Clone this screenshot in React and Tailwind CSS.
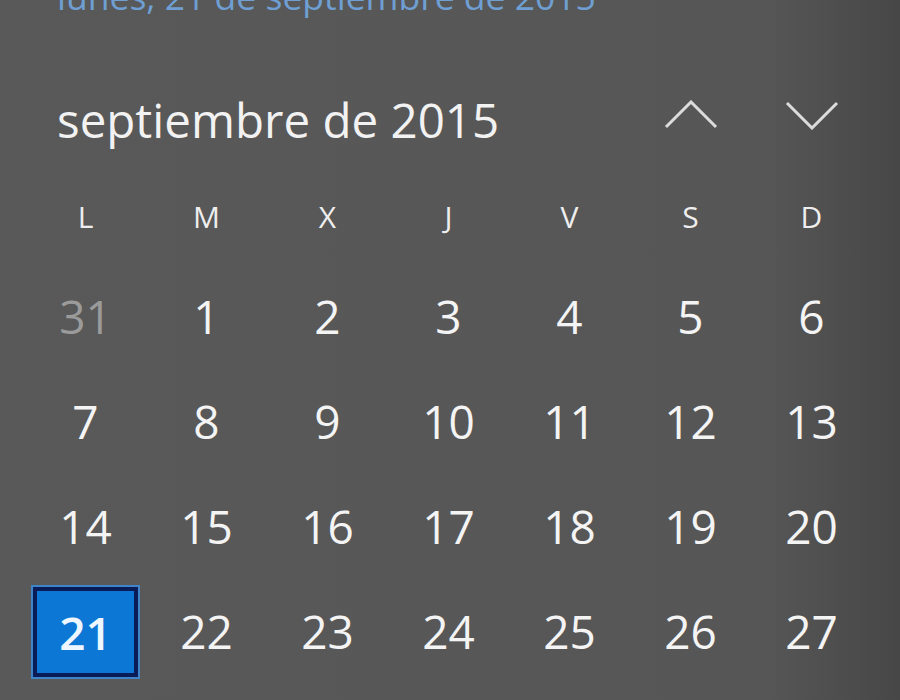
import React from "react";

const rows = [
  [31, 1, 2, 3, 4, 5, 6],
  [7, 8, 9, 10, 11, 12, 13],
  [14, 15, 16, 17, 18, 19, 20],
  [21, 22, 23, 24, 25, 26, 27],
];
const days = ["L", "M", "X", "J", "V", "S", "D"];

function Chevron({ up }) {
  return (
    <svg width="54" height="30" viewBox="0 0 54 30" className="-mt-[10px]">
      <polyline
        points={up ? "2,27 27,2 52,27" : "2,3 27,28 52,3"}
        fill="none"
        stroke="#dcdcdc"
        strokeWidth="3"
      />
    </svg>
  );
}

export default function App() {
  return (
    <div
      className="w-[900px] h-[700px] overflow-hidden bg-[linear-gradient(to_right,#595959_0%,#565656_85%,#474747_100%)] text-[#f2f2f2] flex flex-col"
      style={{ fontFamily: '"Open Sans", "Noto Sans", sans-serif' }}
    >
      <div className="h-[40px] mt-[-24px] leading-[40px] text-[35.5px] pl-[57px] text-[#6f9fd2] whitespace-nowrap">
        lunes, 21 de septiembre de 2015
      </div>
      <div className="mt-[64px] h-[80px] flex items-center pl-[57px] pr-[28px]">
        <div className="flex-1 text-[47.5px] leading-none whitespace-nowrap">septiembre de 2015</div>
        <div className="w-[121px] flex justify-center">
          <Chevron up />
        </div>
        <div className="w-[121px] flex justify-center">
          <Chevron />
        </div>
      </div>
      <div className="mt-[10px] h-[93px] pl-[25px] grid grid-cols-[repeat(7,121px)] items-center">
        {days.map((d) => (
          <div key={d} className="text-center text-[30px] leading-none text-[#eeeeee]">
            {d}
          </div>
        ))}
      </div>
      {rows.map((r, i) => (
        <div key={i} className="h-[105px] pl-[25px] grid grid-cols-[repeat(7,121px)] items-center">
          {r.map((n, j) => {
            if (i === 3 && j === 0) {
              return (
                <div key={j} className="flex justify-center">
                  <div className="w-[105px] h-[90px] mt-[2px] border-[4px] border-[#0a1c58] bg-[#0d77d6] shadow-[0_0_0_2px_#3d84c9] flex items-center justify-center text-[46px] leading-none font-semibold text-[#eef7ff]">
                    {n}
                  </div>
                </div>
              );
            }
            return (
              <div
                key={j}
                className={`text-center text-[46px] leading-none ${i === 0 && j === 0 ? "text-[#9b9b9b]" : "text-[#f4f4f4]"}`}
              >
                {n}
              </div>
            );
          })}
        </div>
      ))}
    </div>
  );
}
